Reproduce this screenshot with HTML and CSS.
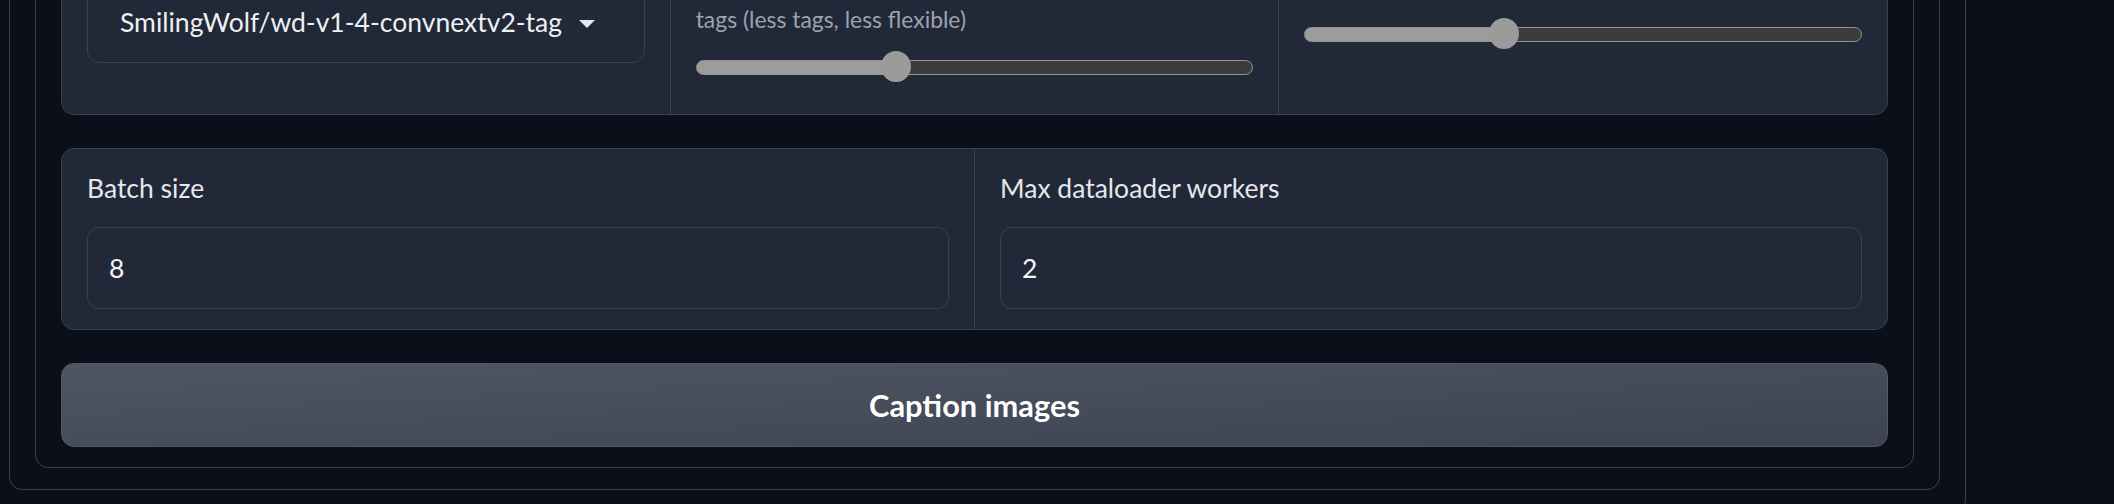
FILE: index.html
```html
<!DOCTYPE html>
<html lang="en">
<head>
<meta charset="utf-8">
<title>WD14 Captioning</title>
<link rel="stylesheet" href="styles.css">
</head>
<body>
<div class="shell">
  <div class="tab">
    <div class="group">
      <div class="form form-3">
        <div class="block">
          <label class="label">Model</label>
          <div class="dropdown">
            <span class="dd-value">SmilingWolf/wd-v1-4-convnextv2-tagger-v2</span>
            <svg class="dd-arrow" viewBox="0 0 16 8" width="16" height="8"><path d="M0 0H16L8 8Z"/></svg>
          </div>
        </div>
        <div class="block">
          <div class="slider-head"><span class="label">General threshold</span></div>
          <div class="info">Adjust `general_threshold` for pruning<br>tags (less tags, less flexible)</div>
          <input class="range" type="range" min="0" max="1" step="0.05" value="0.35" style="--p: 36%">
        </div>
        <div class="block">
          <div class="slider-head"><span class="label">Character threshold</span></div>
          <div class="info">useful if you want to train with character</div>
          <input class="range" type="range" min="0" max="1" step="0.05" value="0.35" style="--p: 36%">
        </div>
      </div>
      <div class="form form-2">
        <div class="block">
          <label class="label">Batch size</label>
          <div class="input">8</div>
        </div>
        <div class="block">
          <label class="label">Max dataloader workers</label>
          <div class="input">2</div>
        </div>
      </div>
      <button class="btn">Caption images</button>
    </div>
  </div>
</div>
</body>
</html>
```
FILE: styles.css
```css
* { box-sizing: border-box; }
html, body {
  margin: 0;
  padding: 0;
  height: 504px;
  overflow: hidden;
  background: #0b0f19;
}
body {
  font-family: Lato, "Noto Sans", sans-serif;
  color: #e5e7eb;
}
.shell {
  margin: -176px 0 0 -17px;
  width: 1983px;
  border: 1px solid #394150;
  border-radius: 13px;
  padding: 25px 25px 22px;
}
.tab {
  border: 1px solid #394150;
  border-radius: 13px;
  padding: 25px 25px 21px;
}
.group {
  border: 1px solid #394150;
  border-radius: 13px;
  padding: 25px 25px 20px;
  display: flex;
  flex-direction: column;
  gap: 33px;
}
.form {
  display: grid;
  gap: 1px;
  background: #394150;
  border: 1px solid #394150;
  border-radius: 13px;
  overflow: hidden;
}
.form-3 { grid-template-columns: repeat(3, minmax(0, 1fr)); }
.form-2 { grid-template-columns: repeat(2, minmax(0, 1fr)); }
.block {
  min-width: 0;
  background: #212837;
  padding: 21px 25px 20px;
  display: flex;
  flex-direction: column;
}
.form-3 .block { padding-bottom: 32px; }
.label {
  display: block;
  font-size: 26.5px;
  line-height: 36px;
  color: #e5e7eb;
  margin-bottom: 21px;
}
.slider-head { margin-bottom: 10px; }
.slider-head .label { margin-bottom: 0; }
.info {
  font-size: 22.9px;
  line-height: 33px;
  color: #9ca3af;
  margin-bottom: 16px;
}
.dropdown {
  height: 82px;
  border: 1px solid #394150;
  border-radius: 12px;
  background: #212837;
  display: flex;
  align-items: center;
  padding: 0 49px 0 32px;
}
.dd-value {
  flex: 1;
  min-width: 0;
  overflow: hidden;
  white-space: nowrap;
  font-size: 26.5px;
  color: #eef0f3;
}
.dd-arrow {
  margin-left: 17px;
  margin-top: 3px;
  fill: #e5e7eb;
  flex: none;
}
.input {
  height: 82px;
  border: 1px solid #394150;
  border-radius: 12px;
  background: #212837;
  display: flex;
  align-items: center;
  padding: 0 21px;
  font-size: 26.5px;
  color: #f3f4f6;
}
.range {
  -webkit-appearance: none;
  appearance: none;
  display: block;
  width: 100%;
  height: 30px;
  margin: 0;
  background: transparent;
}
.range::-webkit-slider-runnable-track {
  height: 15px;
  border-radius: 8px;
  border: 1.5px solid #959595;
  box-sizing: border-box;
  background: linear-gradient(to right, #9c9c9c var(--p), #3b3b3b var(--p));
}
.range::-webkit-slider-thumb {
  -webkit-appearance: none;
  appearance: none;
  width: 30px;
  height: 31px;
  border-radius: 50%;
  border: none;
  background: #9b9b9b;
  margin-top: -9.5px;
}
.btn {
  height: 84px;
  width: 100%;
  border: 1px solid #525a68;
  border-radius: 13px;
  background: linear-gradient(to bottom right, #4e5563, #3d4351);
  color: #ffffff;
  font-family: Lato, "Noto Sans", sans-serif;
  font-weight: 700;
  font-size: 30.8px;
  padding: 0;
}
```
